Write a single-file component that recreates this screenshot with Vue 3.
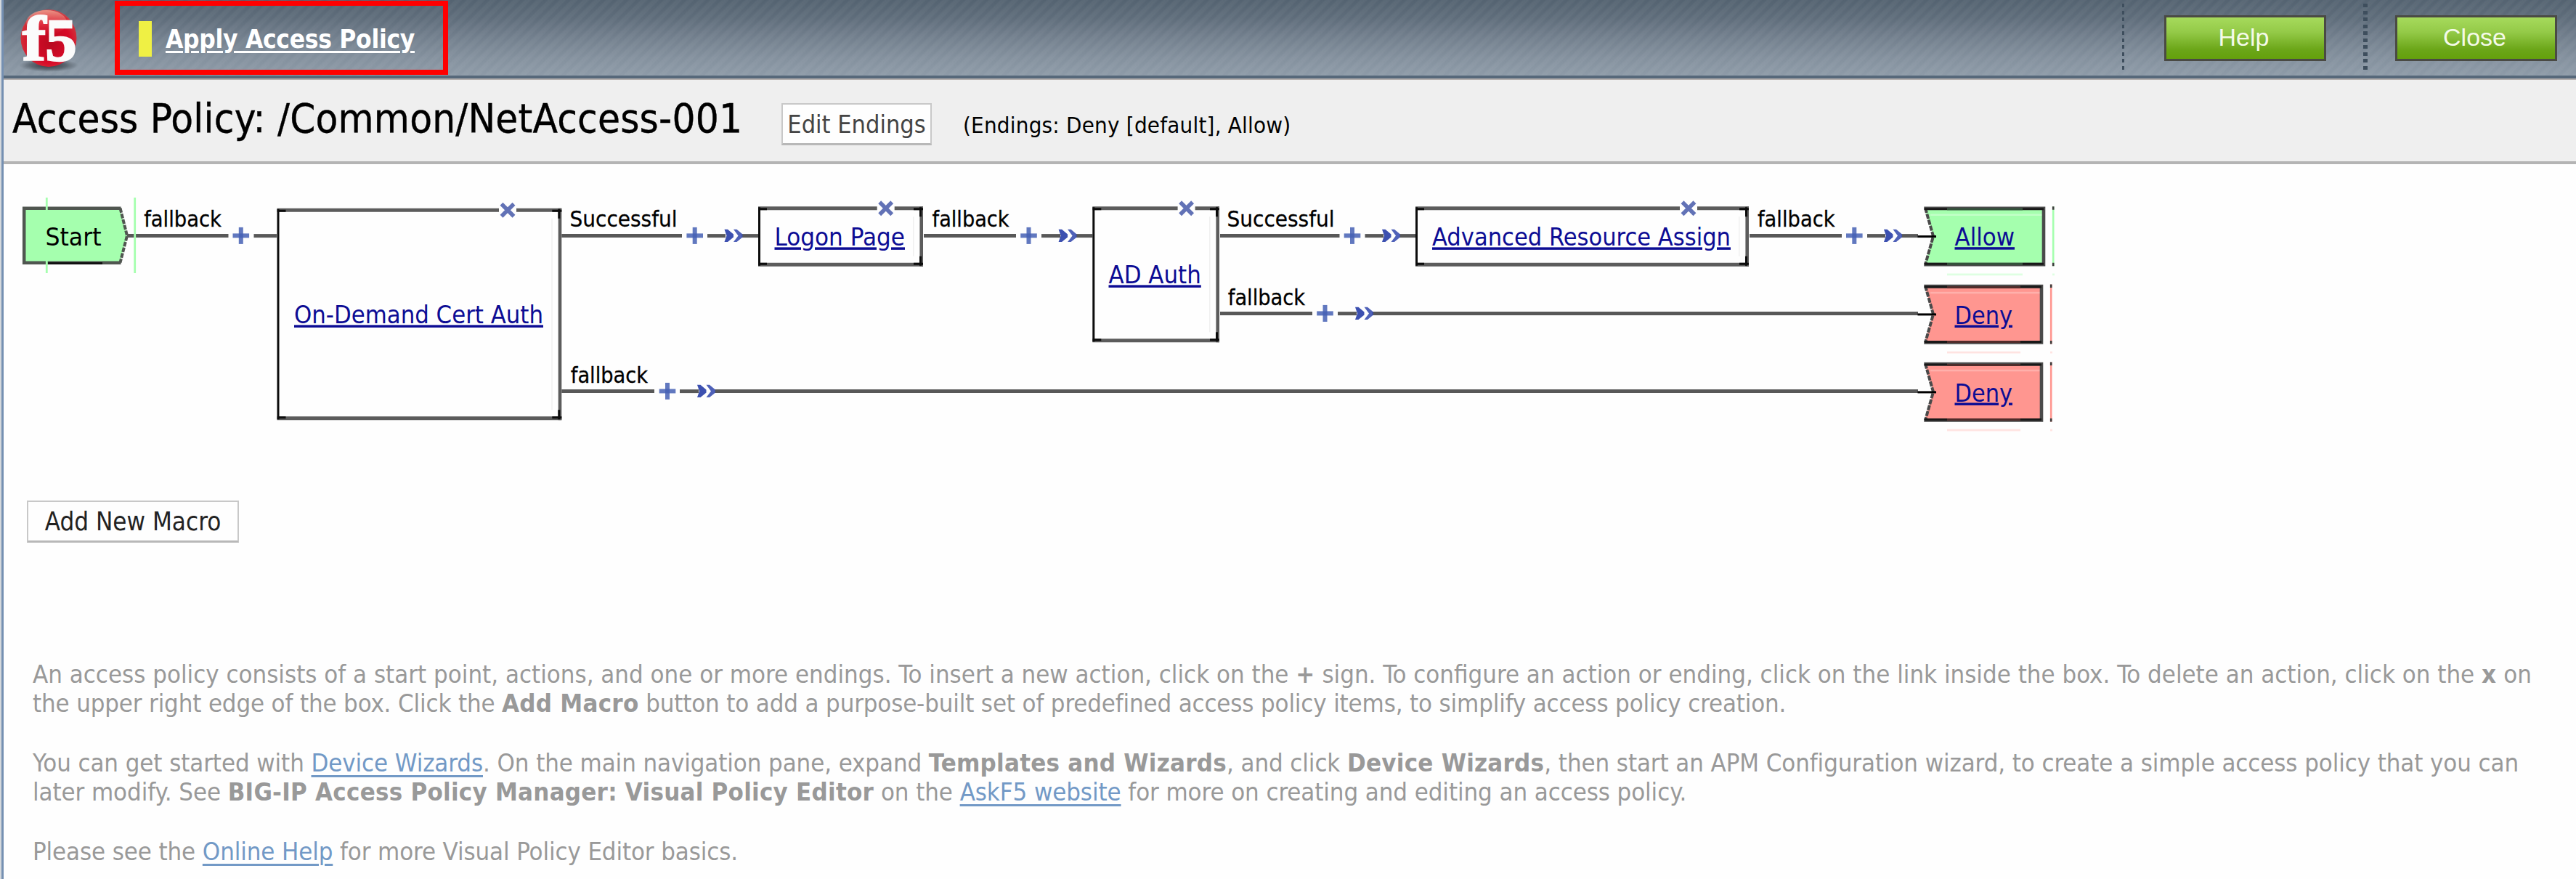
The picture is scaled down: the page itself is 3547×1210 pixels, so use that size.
<script setup>
// Straight connector segments: [x1, x2, y]
const lines = [
  [175, 314.5, 324.6], [349.5, 381, 324.6],
  [773, 939, 324.6], [974, 999, 324.6], [1021, 1044, 324.6],
  [1272, 1399, 324.6], [1434, 1460, 324.6], [1481, 1505, 324.6],
  [1680, 1844.5, 324.6], [1879.5, 1905, 324.6], [1927, 1949, 324.6],
  [2409, 2536, 324.6], [2571, 2596, 324.6], [2618, 2641, 324.6],
  [1680, 1807, 431.6], [1842, 1868, 431.6], [1889, 2641, 431.6],
  [773, 901, 538.6], [936, 962, 538.6], [984, 2641, 538.6],
]
const pluses = [[331.8, 324.4], [956.7, 324.4], [1416.5, 324.4], [1862, 324.4], [2553.3, 324.4], [1824.5, 431.4], [919, 538.4]]
const arrows = [[997.5, 324.4], [1457.6, 324.4], [1903, 324.4], [2594, 324.4], [1866, 431.4], [960, 538.4]]

const boxes = [
  { x: 381.5, r: 773.3, y: 286.8, b: 578.3, cx: 699, text: 'On-Demand Cert Auth', tx: 405, tr: 748, base: 445.4 },
  { x: 1044, r: 1271, y: 284.3, b: 366.7, cx: 1219.7, text: 'Logon Page', tx: 1066.5, tr: 1246, base: 338.4 },
  { x: 1504.3, r: 1679, y: 284.3, b: 471.3, cx: 1633.6, text: 'AD Auth', tx: 1526.5, tr: 1653.8, base: 390.4 },
  { x: 1949, r: 2408, y: 284.3, b: 366.7, cx: 2325, text: 'Advanced Resource Assign', tx: 1972, tr: 2383, base: 338.4 },
]

const labels = [
  ['fallback', 198.2, 305, 312.4], ['Successful', 784.6, 932.5, 312.4],
  ['fallback', 1283.6, 1389.5, 312.4], ['Successful', 1689.6, 1837.5, 312.4],
  ['fallback', 2420, 2526.5, 312.4], ['fallback', 1690.8, 1797, 419.6],
  ['fallback', 785.8, 892, 526.6],
]

const endings = [
  { text: 'Allow', y: 284.3, r: 2816, tr: 2774, fill: '#a5ffae', hi: '#c2ffc8', faint: '#deffe2', dark: '#33503a' },
  { text: 'Deny', y: 391.6, r: 2813, tr: 2771, fill: '#ff9690', hi: '#ffb0ab', faint: '#ffe3e1', dark: '#4f2c2a' },
  { text: 'Deny', y: 498.6, r: 2813, tr: 2771, fill: '#ff9690', hi: '#ffb0ab', faint: '#ffe3e1', dark: '#4f2c2a' },
]
</script>

<template>
  <div class="page">
    <header class="topbar">
      <svg class="logo" viewBox="23 0 92 104" width="92" height="104">
        <defs>
          <radialGradient id="ball" cx="0.5" cy="0.55" r="0.6" fx="0.55" fy="0.6">
            <stop offset="0" stop-color="#b80a20" />
            <stop offset="0.6" stop-color="#d80a28" />
            <stop offset="0.85" stop-color="#d0303a" />
            <stop offset="1" stop-color="#b86a70" />
          </radialGradient>
          <linearGradient id="gloss" x1="0" y1="0" x2="0" y2="1">
            <stop offset="0" stop-color="#f0a090" stop-opacity="0.85" />
            <stop offset="1" stop-color="#e8404a" stop-opacity="0" />
          </linearGradient>
          <radialGradient id="shade">
            <stop offset="0" stop-color="#20262d" stop-opacity="0.85" />
            <stop offset="0.6" stop-color="#303840" stop-opacity="0.5" />
            <stop offset="1" stop-color="#404850" stop-opacity="0" />
          </radialGradient>
        </defs>
        <ellipse cx="67" cy="90" rx="41" ry="9" fill="url(#shade)" />
        <ellipse cx="67" cy="52.500" rx="38.500" ry="39.500" fill="url(#ball)" />
        <ellipse cx="64" cy="31" rx="28" ry="17" fill="url(#gloss)" />
        <text class="logo-mark logo-f" x="31" y="82.500" textLength="32" lengthAdjust="spacingAndGlyphs">f</text>
        <text class="logo-mark logo-5" x="62.500" y="83" textLength="43" lengthAdjust="spacingAndGlyphs">5</text>
      </svg>
      <div class="apply">
        <span class="flag"></span>
        <a class="apply-link">Apply Access Policy</a>
      </div>
      <div class="actions">
        <i class="sep"></i>
        <button class="green help">Help</button>
        <i class="sep wide"></i>
        <button class="green close">Close</button>
      </div>
    </header>

    <section class="titlebar">
      <h1>Access Policy: /Common/NetAccess-001</h1>
      <button class="plain edit">Edit Endings</button>
      <span class="endings">(Endings: Deny [default], Allow)</span>
    </section>

    <svg class="flow" viewBox="5 226 3542 463" width="3542" height="463">
      <path d="M33.5 286.5H165L175 324.5L165 361.5H33.5Z" fill="#a5ffae" />
      <path d="M165.500 286.500L175 324.500L165.500 361.500" fill="none" stroke="#505650" stroke-width="4" stroke-dasharray="6.5 1.500" />
      <path d="M166.500 286.700H33.200V361.800H166.500" fill="none" stroke="#505650" stroke-width="4.500" />
      <path d="M66 362.500H141" stroke="#111" stroke-width="3" />

      <line v-for="(l, i) in lines" :key="'l' + i" :x1="l[0]" :x2="l[1]" :y1="l[2]" :y2="l[2]" stroke="#585858" stroke-width="5" />
      <path d="M64.300 272V290M64.300 358.500V376M185.700 272V376" stroke="#a5ffae" stroke-width="2.800" />

      <g v-for="(p, i) in pluses" :key="'p' + i" :transform="`translate(${p[0]} ${p[1]})`" fill="#4560b4">
        <rect x="-11.300" y="-3" width="22.600" height="6" opacity="0.85" />
        <rect x="-3" y="-11.500" width="6" height="23" opacity="0.85" />
      </g>
      <g v-for="(a, i) in arrows" :key="'a' + i" :transform="`translate(${a[0]} ${a[1]})`" fill="#3c50b0">
        <path d="M0 -8.700H4.500L12.500 -2V2L4.500 8.700H0L3 0Z" />
        <path d="M12.500 -8.700H17L25 -2V2L17 8.700H12.500L19 0Z" opacity="0.9" />
      </g>

      <g v-for="b in boxes" :key="b.text">
        <rect :x="b.x" :y="b.y" :width="b.r - b.x" :height="b.b - b.y" fill="#fefefe" />
        <path :d="`M${b.x} ${b.y + 2.5}H${b.r}M${b.x} ${b.b - 2.5}H${b.r}`" stroke="#5c5c5c" stroke-width="5" />
        <path :d="`M${b.r - 2.3} ${b.y}V${b.b}`" stroke="#5c5c5c" stroke-width="4.600" />
        <path :d="`M${b.x + 1.5} ${b.y + 1}V${b.b - 1}M${b.x} ${b.y + 3.5}h12M${b.x} ${b.b - 3.5}h12M${b.r} ${b.y + 3.5}h-13M${b.r} ${b.b - 3.5}h-13M${b.r - 3.5} ${b.y + 1}v13M${b.r - 3.5} ${b.b - 1}v-13`" stroke="#0c0c0c" stroke-width="3" />
        <rect :x="b.r - 14" :y="b.y + 14" width="1.500" :height="b.b - b.y - 28" fill="#f0f0f0" />
        <rect :x="b.cx - 12" :y="b.y - 4" width="24" height="12" fill="#fefefe" />
        <path :d="`M${b.cx - 8.5} ${b.y - 6}l17 17M${b.cx + 8.5} ${b.y - 6}l-17 17`" stroke="#6272b6" stroke-width="5.500" />
        <a class="node-link">
          <text :x="b.tx" :y="b.base" :textLength="b.tr - b.tx" lengthAdjust="spacingAndGlyphs">{{ b.text }}</text>
        </a>
      </g>

      <text v-for="(t, i) in labels" :key="'t' + i" class="branch" :x="t[1]" :y="t[3]" :textLength="t[2] - t[1]" lengthAdjust="spacingAndGlyphs">{{ t[0] }}</text>
      <text class="start" x="62.500" y="338.400" textLength="77" lengthAdjust="spacingAndGlyphs">Start</text>

      <g v-for="e in endings" :key="e.y">
        <path :d="`M2650 ${e.y + 2}H${e.r - 2}V${e.y + 80}H2650L2662 ${e.y + 41}Z`" :fill="e.fill" />
        <rect x="2658" :y="e.y + 10.2" :width="e.r - 2662" height="2.500" :fill="e.hi" />
        <path :d="`M2651 ${e.y + 2}L2662 ${e.y + 41}L2651 ${e.y + 80}`" fill="none" stroke="#4a4a4a" stroke-width="4" stroke-dasharray="7 1.500" />
        <path :d="`M2649.3 ${e.y + 2.5}H${e.r - 2}V${e.y + 79.8}H2649.3`" fill="none" stroke="#4a4a4a" stroke-width="4.600" />
        <path :d="`M2650 ${e.y + 3.5}H2681M${e.r - 31} ${e.y + 3.5}H${e.r - 2}M2650 ${e.y + 79}H2681M${e.r - 31} ${e.y + 79}H${e.r - 2}`" stroke="#181818" stroke-width="3" />
        <path :d="`M2681 ${e.y + 3.8}H${e.r - 31}M2681 ${e.y + 79}H${e.r - 31}`" :stroke="e.dark" stroke-width="3" />
        <path :d="`M2640.5 ${e.y + 41.3}H2666`" stroke="#000" stroke-width="3" />
        <path :d="`M${e.r + 11.2} ${e.y}V${e.y + 82}`" :stroke="e.fill" stroke-width="2.600" />
        <path :d="`M${e.r + 11.2} ${e.y}v4.5M${e.r + 11.2} ${e.y + 82}v-4.5`" stroke="#3c3c3c" stroke-width="2.600" />
        <path :d="`M2681 ${e.y + 93.5}H${e.r - 31}M${e.r + 10} ${e.y + 93.5}h3`" :stroke="e.faint" stroke-width="2.800" />
        <a class="node-link">
          <text x="2691.500" :y="e.y + 53.9" :textLength="e.tr - 2691.5" lengthAdjust="spacingAndGlyphs">{{ e.text }}</text>
        </a>
      </g>
    </svg>

    <main class="content">
      <button class="plain macro">Add New Macro</button>
      <div class="guide">
        <p>
          <span class="l1">An access policy consists of a start point, actions, and one or more endings. To insert a new action, click on the <b>+</b> sign. To configure an action or ending, click on the link inside the box. To delete an action, click on the <b>x</b> on</span><br>
          <span class="l2">the upper right edge of the box. Click the <b>Add Macro</b> button to add a purpose-built set of predefined access policy items, to simplify access policy creation.</span>
        </p>
        <p>
          <span class="l3">You can get started with <a>Device Wizards</a>. On the main navigation pane, expand <b>Templates and Wizards</b>, and click <b>Device Wizards</b>, then start an APM Configuration wizard, to create a simple access policy that you can</span><br>
          <span class="l4">later modify. See <b>BIG-IP Access Policy Manager: Visual Policy Editor</b> on the <a>AskF5 website</a> for more on creating and editing an access policy.</span>
        </p>
        <p><span class="l5">Please see the <a>Online Help</a> for more Visual Policy Editor basics.</span></p>
      </div>
    </main>
  </div>
</template>

<style>
body { background: #d4d8dc; }
</style>

<style scoped>
.page {
  box-sizing: border-box;
  width: 3545px;
  height: 1210px;
  margin-left: 2px;
  border-left: 3px solid #7590b2;
  background: #fefefe;
  font-family: "DejaVu Sans Condensed", "DejaVu Sans", sans-serif;
  overflow: hidden;
}
.topbar {
  display: flex;
  box-sizing: border-box;
  height: 110px;
  border-bottom: 2px solid #b5b0ae;
  background:
    linear-gradient(#56687a, #56687a) 0 104px / 100% 4px no-repeat,
    repeating-linear-gradient(135deg, rgba(255, 255, 255, 0.04) 0 4px, rgba(255, 255, 255, 0) 6.500px 9px, rgba(255, 255, 255, 0.04) 11.300px),
    linear-gradient(#546371 0, #5f6d7b 25px, #73808e 52px, #84919e 80px, #8e9ba8 104px);
}
.logo { margin-left: 18px; flex: none; }
.logo-mark { font-family: "Liberation Serif", serif; font-weight: bold; fill: #fbfbfb; stroke: #fbfbfb; stroke-width: 2.5px; }
.logo-f { font-size: 86px; }
.logo-5 { font-size: 82px; }
.apply {
  box-sizing: border-box;
  display: flex;
  width: 459px;
  height: 102px;
  margin: 1px 0 0 43px;
  padding: 21px 0 0 26px;
  border: 7px solid #ff0000;
}
.flag { width: 18px; height: 49px; background: #eff044; }
.apply-link {
  margin-left: 19px;
  margin-top: 5px;
  height: 41px;
  line-height: 41px;
  font-size: 35px;
  font-weight: bold;
  letter-spacing: -0.3px;
  color: #fff;
  white-space: nowrap;
  text-decoration: underline;
  text-decoration-thickness: 3px;
  text-underline-offset: 4px;
}
.actions { display: flex; margin-left: auto; margin-right: 26px; }
.sep {
  width: 3px;
  height: 91px;
  margin-top: 5px;
  background: repeating-linear-gradient(#3e4e5d 0 5px, transparent 5px 9.550px);
}
.sep.wide { width: 6px; margin-left: 51px; }
.green {
  box-sizing: border-box;
  width: 223px;
  height: 63px;
  margin: 21px 0 0 55px;
  padding: 0 4px 3px 0;
  border: 3px solid #4a4a44;
  background: linear-gradient(#a6da5c, #94ca48 35%, #6ba618 78%, #64a00c);
  font: 34px/54px "Liberation Sans", sans-serif;
  color: #f4fae8;
  text-align: center;
}
.green.close { margin-left: 38px; }
.titlebar {
  box-sizing: border-box;
  display: flex;
  height: 116px;
  padding-left: 12px;
  border-bottom: 4px solid #b4b4b4;
  background: #efefef;
}
h1 {
  width: 1059px;
  margin: 0;
  padding-top: 20px;
  font-size: 56px;
  font-weight: normal;
  line-height: 65px;
  letter-spacing: 0.2px;
  white-space: nowrap;
  -webkit-text-stroke: 0.4px #000;
}
.plain {
  box-sizing: border-box;
  padding: 0;
  border: 2px solid #c8c8c8;
  border-bottom: 3px solid #b8b8b8;
  background: #fefefe;
  font-family: inherit;
  white-space: nowrap;
  text-align: center;
}
.edit { width: 207px; height: 58px; margin-top: 32px; font-size: 34px; line-height: 50px; color: #444; }
.endings { margin: 44px 0 0 43px; font-size: 31px; line-height: 36px; letter-spacing: 0.22px; white-space: nowrap; }
.flow { display: block; }
.flow text { font-family: "DejaVu Sans Condensed", "DejaVu Sans", sans-serif; font-size: 34.500px; }
.flow text.branch { font-size: 31px; stroke: #000; stroke-width: 0.3px; }
.node-link text {
  fill: #0c0c94;
  text-decoration: underline;
  text-decoration-thickness: 3px;
  text-underline-offset: 4px;
}
.content { padding-left: 32px; }
.macro { display: block; width: 292px; height: 58px; font-size: 34.700px; line-height: 50px; color: #222; }
.guide { margin: 160.500px 0 0 8px; font-size: 34.500px; line-height: 40.700px; color: #999; white-space: nowrap; }
.guide p { margin: 0 0 40.700px; }
.guide b { letter-spacing: 0.25px; }
.guide a { color: #7299c6; text-decoration: underline; text-decoration-thickness: 3px; text-underline-offset: 5px; }
.l2 { letter-spacing: -0.155px; }
.l3 { letter-spacing: -0.1px; }
.l4 { letter-spacing: -0.09px; }
.l5 { letter-spacing: -0.12px; }
</style>
